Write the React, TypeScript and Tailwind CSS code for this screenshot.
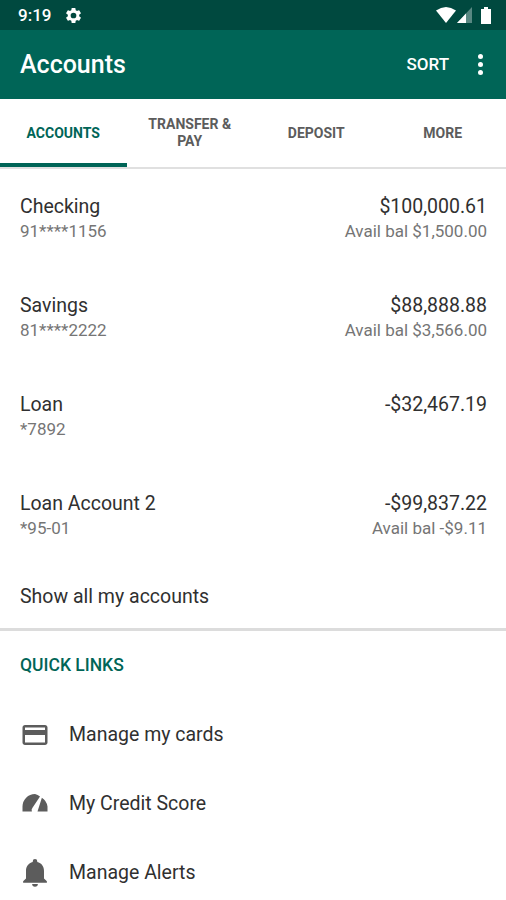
import React from 'react';

interface Account {
  name: string;
  number: string;
  balance: string;
  available?: string;
}

const accounts: Account[] = [
  { name: 'Checking', number: '91****1156', balance: '$100,000.61', available: 'Avail bal $1,500.00' },
  { name: 'Savings', number: '81****2222', balance: '$88,888.88', available: 'Avail bal $3,566.00' },
  { name: 'Loan', number: '*7892', balance: '-$32,467.19' },
  { name: 'Loan Account 2', number: '*95-01', balance: '-$99,837.22', available: 'Avail bal -$9.11' },
];

const tabs = ['ACCOUNTS', 'TRANSFER & PAY', 'DEPOSIT', 'MORE'];

const StatusBar: React.FC = () => (
  <div className="flex h-[30px] items-center bg-[#00493f] pl-[18px] pr-[15px] text-white">
    <span className="text-[17px] font-medium leading-none">9:19</span>
    <svg className="ml-[13px] size-[19px]" viewBox="0 0 24 24" fill="currentColor">
      <path d="M19.14 12.94c.04-.3.06-.61.06-.94s-.02-.64-.07-.94l2.03-1.58a.49.49 0 0 0 .12-.61l-1.92-3.32a.49.49 0 0 0-.59-.22l-2.39.96a7 7 0 0 0-1.62-.94l-.36-2.54A.48.48 0 0 0 13.92 2.4h-3.84a.48.48 0 0 0-.47.41l-.36 2.54a7.4 7.4 0 0 0-1.62.94l-2.39-.96a.48.48 0 0 0-.59.22L2.74 8.87a.48.48 0 0 0 .12.61l2.03 1.58a6.4 6.4 0 0 0 0 1.88l-2.03 1.58a.49.49 0 0 0-.12.61l1.92 3.32c.12.22.37.29.59.22l2.39-.96c.5.38 1.03.7 1.62.94l.36 2.54c.05.24.24.41.48.41h3.84c.24 0 .44-.17.47-.41l.36-2.54a7 7 0 0 0 1.62-.94l2.39.96c.22.08.47 0 .59-.22l1.92-3.32a.48.48 0 0 0-.12-.61zM12 15.6a3.6 3.6 0 1 1 0-7.2 3.6 3.6 0 0 1 0 7.2" />
    </svg>
    <svg className="ml-auto h-[16px] w-[20px]" viewBox="0 0 20 16" fill="currentColor">
      <path d="M0 3.5Q10-3.5 20 3.5L10 16z" />
    </svg>
    <svg className="ml-px h-[16px] w-[15px]" viewBox="0 0 15 16" fill="currentColor">
      <path d="M15 0v16H0z" opacity=".35" />
      <path d="M9 6.4V16H0z" />
    </svg>
    <svg className="ml-[9px] h-[17px] w-[10px]" viewBox="0 0 10 17" fill="currentColor">
      <path d="M3 0h4v2h3v15H0V2h3z" />
    </svg>
  </div>
);

const AccountRow: React.FC<{ account: Account }> = ({ account }) => (
  <div className="flex h-[99px] justify-between pl-5 pr-[19px] pt-[26px]">
    <div>
      <div className="text-[19.5px] leading-6 text-[#303030]">{account.name}</div>
      <div className="text-[17px] leading-[25px] text-[#757575]">{account.number}</div>
    </div>
    <div className="text-right">
      <div className="text-[19.5px] leading-6 text-[#303030]">{account.balance}</div>
      {account.available && (
        <div className="text-[17px] leading-[25px] text-[#757575]">{account.available}</div>
      )}
    </div>
  </div>
);

const QuickLink: React.FC<{ label: string; children: React.ReactNode }> = ({ label, children }) => (
  <div className="flex h-[69px] items-center pl-5">
    <svg className="size-[30px] text-[#5c5c5c]" viewBox="0 0 24 24" fill="currentColor">
      {children}
    </svg>
    <span className="ml-[19px] text-[19.5px] text-[#303030]">{label}</span>
  </div>
);

const App: React.FC = () => {
  return (
    <div className="h-[900px] overflow-hidden bg-white font-[Roboto,sans-serif]">
      <StatusBar />
      <header className="flex h-[69px] items-center bg-[#006557] pl-5 pr-[23px] text-white">
        <h1 className="text-[25px] font-medium">Accounts</h1>
        <span className="ml-auto text-[17px] font-medium">SORT</span>
        <div className="ml-[29px] flex flex-col gap-[3px]">
          <i className="size-[5px] rounded-full bg-white" />
          <i className="size-[5px] rounded-full bg-white" />
          <i className="size-[5px] rounded-full bg-white" />
        </div>
      </header>
      <nav className="grid h-[70px] grid-cols-4 border-b-2 border-[#e0e0e0]">
        {tabs.map((tab, i) => (
          <div
            key={tab}
            className={`flex items-center justify-center px-4 text-center text-[14px] font-bold leading-[17px] ${
              i === 0 ? 'border-b-4 border-[#006557] pt-1 text-[#006557]' : 'text-[#5c5c5c]'
            }`}
          >
            {tab}
          </div>
        ))}
      </nav>
      <main>
        {accounts.map((account) => (
          <AccountRow key={account.name} account={account} />
        ))}
        <div className="flex h-[66px] items-center border-b-[3px] border-[#dcdcdc] pl-5 text-[19.5px] text-[#303030]">
          Show all my accounts
        </div>
        <h2 className="flex h-[69px] items-center pl-5 text-[17.5px] font-medium text-[#006557]">QUICK LINKS</h2>
        <QuickLink label="Manage my cards">
          <path d="M20 4H4c-1.1 0-2 .9-2 2v12c0 1.1.9 2 2 2h16c1.1 0 2-.9 2-2V6c0-1.1-.9-2-2-2m0 14H4v-6h16zm0-10H4V6h16z" />
        </QuickLink>
        <QuickLink label="My Credit Score">
          <path d="M12 4A10 10 0 0 0 2 14v4h7.5a3 3 0 0 1 .5-3l6-9a10 10 0 0 0-4-2m5.5 3L14 18h8v-4a10 10 0 0 0-4.5-7" />
        </QuickLink>
        <QuickLink label="Manage Alerts">
          <path d="M12 23a2.3 2.3 0 0 0 2.3-2.2H9.700A2.300 2.300 0 0 0 12 23m7.200-6.700v-6c0-3.500-1.900-6.300-5.400-7.100v-.7a1.800 1.800 0 0 0-3.600 0v.7C6.700 4 4.800 6.900 4.800 10.300v6L2.500 18.600v1.100h19v-1.100z" />
        </QuickLink>
      </main>
    </div>
  );
};

export default App;
